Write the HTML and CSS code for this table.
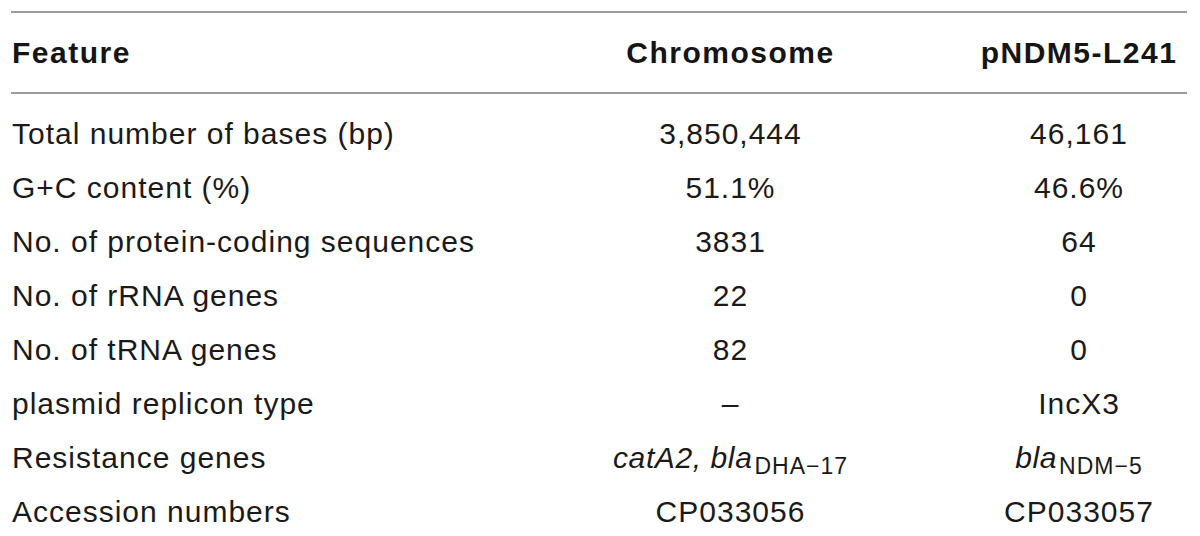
FILE: index.html
```html
<!DOCTYPE html>
<html>
<head>
<meta charset="utf-8">
<link rel="stylesheet" href="styles.css">
</head>
<body>
<table class="data">
  <colgroup>
    <col class="c1">
    <col class="c2">
    <col class="c3">
  </colgroup>
  <thead>
    <tr>
      <th class="left">Feature</th>
      <th>Chromosome</th>
      <th>pNDM5-L241</th>
    </tr>
  </thead>
  <tbody>
    <tr class="first"><td class="left">Total number of bases (bp)</td><td>3,850,444</td><td>46,161</td></tr>
    <tr><td class="left">G+C content (%)</td><td>51.1%</td><td>46.6%</td></tr>
    <tr><td class="left">No. of protein-coding sequences</td><td>3831</td><td>64</td></tr>
    <tr><td class="left">No. of rRNA genes</td><td>22</td><td>0</td></tr>
    <tr><td class="left">No. of tRNA genes</td><td>82</td><td>0</td></tr>
    <tr><td class="left">plasmid replicon type</td><td>–</td><td>IncX3</td></tr>
    <tr><td class="left">Resistance genes</td><td><i>catA2, bla</i><sub>DHA−17</sub></td><td><i>bla</i><sub>NDM−5</sub></td></tr>
    <tr><td class="left">Accession numbers</td><td>CP033056</td><td>CP033057</td></tr>
  </tbody>
</table>
</body>
</html>
```

FILE: styles.css
```css
html, body {
  margin: 0;
  padding: 0;
  background: #ffffff;
}

body {
  padding: 11px 13px 0 11px;
  font-family: "Liberation Sans", Arial, sans-serif;
  color: #1a1a1a;
}

.data {
  width: 1176px;
  border-collapse: collapse;
  table-layout: fixed;
}

.c1 { width: 479px; }
.c2 { width: 481px; }
.c3 { width: 216px; }

.data thead tr {
  border-top: 2px solid #9c9c9c;
  border-bottom: 2px solid #9c9c9c;
}

.data th {
  height: 79px;
  padding: 0;
  font-size: 30px;
  font-weight: bold;
  letter-spacing: 1.5px;
  text-align: center;
  vertical-align: middle;
  color: #151515;
}

.data td {
  height: 54px;
  padding: 0;
  font-size: 30px;
  letter-spacing: 1px;
  text-align: center;
  vertical-align: middle;
  white-space: nowrap;
}

.data tr.first td {
  height: 54px;
  padding-top: 13px;
}

.data .left {
  text-align: left;
  padding-left: 1px;
}

.data sub {
  font-size: 23px;
  letter-spacing: 1px;
  vertical-align: -6px;
  line-height: 0;
  margin-left: 2px;
}

.data i {
  letter-spacing: 0.6px;
}
```
